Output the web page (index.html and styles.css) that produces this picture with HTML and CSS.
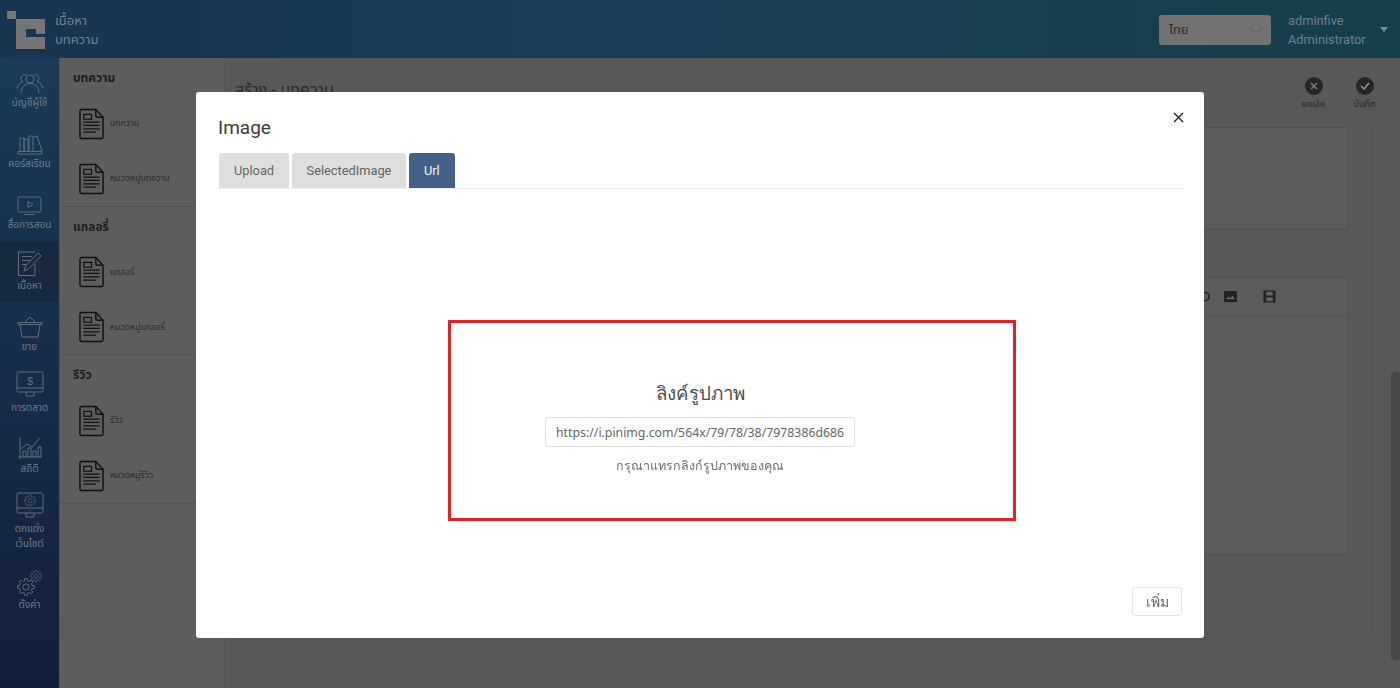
FILE: index.html
```html
<!DOCTYPE html>
<html lang="th">
<head>
<meta charset="utf-8">
<title>Image</title>
<link rel="stylesheet" href="styles.css">
</head>
<body>
<svg class="defs" width="0" height="0" aria-hidden="true">
  <symbol id="doc" viewBox="0 0 26 32">
    <path d="M2.500 1h15l7.500 8v20.500a1.500 1.500 0 0 1-1.500 1.500h-21a1.500 1.500 0 0 1-1.500-1.500v-27a1.500 1.500 0 0 1 1.500-1.500z" fill="none" stroke="currentColor" stroke-width="1.500"/>
    <path d="M17.500 1v6.500a1.500 1.500 0 0 0 1.500 1.500h6" fill="none" stroke="currentColor" stroke-width="1.500"/>
    <rect x="5" y="6" width="8" height="5" fill="none" stroke="currentColor" stroke-width="1.300"/>
    <path d="M4.500 14h17M4.500 17.500h17M4.500 21h17M4.500 24.500h13" fill="none" stroke="currentColor" stroke-width="1.300"/>
  </symbol>
  <symbol id="gear" viewBox="0 0 20 20">
    <path d="M16.790 8.310L19.380 8.510V11.490L16.790 11.690L16 13.610L17.690 15.580L15.580 17.690L13.610 16L11.690 16.790L11.490 19.380H8.510L8.310 16.790L6.390 16L4.420 17.690L2.310 15.580L4 13.610L3.210 11.690L0.620 11.490V8.510L3.210 8.310L4 6.390L2.310 4.420L4.420 2.310L6.390 4L8.310 3.210L8.510 0.620H11.490L11.690 3.210L13.610 4L15.580 2.310L17.690 4.420L16 6.390Z" fill="none" stroke="currentColor" stroke-width="1"/>
    <circle cx="10" cy="10" r="3.500" fill="none" stroke="currentColor" stroke-width="1"/>
  </symbol>
</svg>
<div class="app">
  <header class="topbar">
    <div class="brand">
      <svg class="logo" viewBox="0 0 38 38" width="38" height="38" aria-hidden="true">
        <rect x="0" y="0" width="9" height="8" fill="#757575"/>
        <path d="M9 8h29v15h-9v-5H19v8h19v12H9z" fill="#757575"/>
      </svg>
      <div class="brand-text"><span>เนื้อหา</span><span>บทความ</span></div>
    </div>
    <div class="top-right">
      <div class="lang"><span>ไทย</span>
        <svg width="14" height="8" viewBox="0 0 14 8" aria-hidden="true"><path d="M1 1l6 6 6-6" fill="none" stroke="#5f5f5f"/></svg>
      </div>
      <div class="user"><span>adminfive</span><span>Administrator</span></div>
      <div class="caret"></div>
    </div>
  </header>
  <div class="body">
    <nav class="rail">
      <a class="rail-item">
        <svg viewBox="0 0 28 22" width="28" height="22" aria-hidden="true"><g class="ln"><circle cx="14" cy="7" r="4"/><path d="M5 21c0-6 4-9.500 9-9.500s9 3.500 9 9.500"/><path d="M10.500 3a3.500 3.500 0 1 0-3.500 6.500c-3 1-5.500 3.500-6 7M17.500 3a3.500 3.500 0 1 1 3.500 6.500c3 1 5.500 3.500 6 7"/></g></svg>
        <span>บัญชีผู้ใช้</span></a>
      <a class="rail-item">
        <svg viewBox="0 0 26 20" width="26" height="20" aria-hidden="true"><g class="ln"><path d="M1 19h24v-2.500H1zM3 16V3h4v13M7 16V4h4v12M12 16V1h4v15M17 2l3-1 5 15"/></g></svg>
        <span>คอร์สเรียน</span></a>
      <a class="rail-item">
        <svg viewBox="0 0 26 20" width="26" height="20" aria-hidden="true"><g class="ln"><rect x="1" y="1" width="23" height="15" rx="1.500"/><path d="M11 5.500l5 3-5 3zM7 18.500h11"/></g></svg>
        <span>สื่อการสอน</span></a>
      <a class="rail-item active">
        <svg viewBox="0 0 26 26" width="26" height="26" aria-hidden="true"><g class="ln"><path d="M18 1H1.500v23.500H18V13M5 5.500h10M5 9.500h8M5 13.500h4"/><path d="M7 20l1.500-5L21 2l3 3L12 17.500z"/></g></svg>
        <span>เนื้อหา</span></a>
      <a class="rail-item">
        <svg viewBox="0 0 26 22" width="26" height="22" aria-hidden="true"><g class="ln"><path d="M1 6.500h24v2H1zM3 8.500l2 12.500h16l2-12.500M8 6l5-5 5 5"/></g></svg>
        <span>ขาย</span></a>
      <a class="rail-item">
        <svg viewBox="0 0 28 28" width="28" height="28" aria-hidden="true"><g class="ln"><rect x="1" y="1" width="26" height="20" rx="1.500"/><path d="M1 17h26M10 21v4h8v-4"/></g><text x="14" y="13.500" class="dollar">$</text></svg>
        <span>การตลาด</span></a>
      <a class="rail-item">
        <svg viewBox="0 0 24 24" width="24" height="24" aria-hidden="true"><g class="ln"><path d="M2 1v22M0 21h24M5 21v-6h3v6M10 21v-9h3v9M15 21v-6h3v6M20 21v-10h3v10M3 13l6-5 5 3 8-9"/></g></svg>
        <span>สถิติ</span></a>
      <a class="rail-item tall">
        <svg viewBox="0 0 28 28" width="28" height="28" aria-hidden="true"><g class="ln"><rect x="1" y="1" width="26" height="20" rx="1.500"/><path d="M1 16h26M10 21v4h8v-4M14 18v1"/></g><use href="#gear" x="8" y="2.500" width="12" height="12" class="gear"/></svg>
        <span>ตกแต่ง<br>เว็บไซต์</span></a>
      <a class="rail-item">
        <svg viewBox="0 0 26 26" width="26" height="26" aria-hidden="true"><use href="#gear" x="0" y="8" width="18" height="18" class="gear"/><use href="#gear" x="13" y="0" width="12" height="12" class="gear"/></svg>
        <span>ตั้งค่า</span></a>
    </nav>
    <aside class="submenu">
      <section class="sub-section">
        <h3>บทความ</h3>
        <a class="sub-row"><svg class="doc"><use href="#doc"/></svg><span>บทความ</span></a>
        <a class="sub-row"><svg class="doc"><use href="#doc"/></svg><span>หมวดหมู่บทความ</span></a>
      </section>
      <section class="sub-section">
        <h3>แกลอรี่</h3>
        <a class="sub-row"><svg class="doc"><use href="#doc"/></svg><span>แกลอรี่</span></a>
        <a class="sub-row"><svg class="doc"><use href="#doc"/></svg><span>หมวดหมู่แกลอรี่</span></a>
      </section>
      <section class="sub-section">
        <h3>รีวิว</h3>
        <a class="sub-row"><svg class="doc"><use href="#doc"/></svg><span>รีวิว</span></a>
        <a class="sub-row"><svg class="doc"><use href="#doc"/></svg><span>หมวดหมู่รีวิว</span></a>
      </section>
    </aside>
    <main class="content">
      <div class="content-head">
        <h2>สร้าง - บทความ</h2>
        <div class="actions">
          <div class="action"><span class="round">
            <svg width="10" height="10" viewBox="0 0 10 10" aria-hidden="true"><path d="M2 2l6 6M8 2l-6 6" stroke="#7a7a7a" stroke-width="1.500"/></svg></span><span>ยกเลิก</span></div>
          <div class="action"><span class="round">
            <svg width="10" height="10" viewBox="0 0 10 10" aria-hidden="true"><path d="M1 5l3 3 5-6" fill="none" stroke="#9a9a9a" stroke-width="1.500"/></svg></span><span>บันทึก</span></div>
        </div>
      </div>
      <div class="panel">
        <div class="card card-top"></div>
        <div class="card card-editor">
          <div class="toolbar">
            <svg class="tool" viewBox="0 0 14 14" aria-hidden="true"><path d="M3 7a4.500 4.500 0 1 0 4.500-4.500H3M5 0.500L3 2.500l2 2" fill="none" stroke="#222" stroke-width="1.800"/></svg>
            <svg class="tool tool-gap" viewBox="0 0 14 14" aria-hidden="true"><rect x="0" y="1" width="14" height="12" rx="1" fill="#222"/><path d="M2 10l3-3 2 2 2-3 3 4z" fill="#666"/></svg>
            <svg class="tool" viewBox="0 0 14 14" aria-hidden="true"><rect x="0.500" y="0.500" width="13" height="13" rx="1" fill="#222"/><rect x="3.500" y="2" width="7" height="4" fill="#666"/><rect x="3.500" y="8" width="7" height="4" fill="#666"/></svg>
          </div>
        </div>
      </div>
    </main>
  </div>
  <div class="scroll-thumb"></div>
</div>

<div class="backdrop">
  <div class="modal">
    <div class="modal-head">
      <h1>Image</h1>
      <button class="close" aria-label="Close">
        <svg width="11" height="11" viewBox="0 0 11 11" aria-hidden="true"><path d="M1 1l9 9M10 1l-9 9" stroke="#222" stroke-width="1.400"/></svg>
      </button>
    </div>
    <div class="tabs">
      <div class="tab">Upload</div>
      <div class="tab">SelectedImage</div>
      <div class="tab on">Url</div>
    </div>
    <div class="pane">
      <div class="url-title">ลิงค์รูปภาพ</div>
      <div class="url-input">https://i.pinimg.com/564x/79/78/38/7978386d686</div>
      <div class="url-hint">กรุณาแทรกลิงก์รูปภาพของคุณ</div>
    </div>
    <div class="modal-foot"><button class="add">เพิ่ม</button></div>
    <div class="annotation"></div>
  </div>
</div>
</body>
</html>
```

FILE: styles.css
```css
* { box-sizing: border-box; }
html, body { margin: 0; height: 100%; overflow: hidden; }
body { font-family: "Noto Sans", "Noto Sans Thai", Roboto, sans-serif; background: #585858; color: #222; }
.defs { position: absolute; }
.app { height: 688px; display: flex; flex-direction: column; }

.topbar { height: 58px; flex: none; display: flex; justify-content: space-between; background: linear-gradient(90deg, #19344f 0%, #1a3d55 45%, #153f49 100%); }
.brand { display: flex; align-items: center; padding-left: 7px; gap: 11px; padding-top: 1px; }
.logo { display: block; margin-left: 0; margin-right: -1px; }
.brand-text { display: flex; flex-direction: column; gap: 3px; font-size: 13px; line-height: 16px; color: #76828e; }
.top-right { display: flex; align-items: center; padding-right: 12px; }
.lang { width: 112px; height: 30px; margin-top: 2px; background: #727272; border-radius: 3px; display: flex; align-items: center; justify-content: space-between; padding: 0 8px 0 10px; font-size: 13px; color: #2a2a2a; }
.user { display: flex; flex-direction: column; margin-left: 17px; font-family: Roboto, sans-serif; font-size: 12.800px; line-height: 19px; color: #6e7f85; width: 89px; margin-top: 1px; }
.caret { margin-left: 3px; border: 4px solid transparent; border-top: 5px solid #858b8c; border-left-width: 4.500px; border-right-width: 4.500px; margin-top: 4px; }

.body { flex: 1; display: flex; min-height: 0; }
.rail { width: 59px; flex: none; background: linear-gradient(180deg, #1a3a57 0%, #121f3a 100%); display: flex; flex-direction: column; }
.rail-item { height: 61px; flex: none; display: flex; flex-direction: column; align-items: center; justify-content: flex-end; padding-bottom: 9px; gap: 1px; color: #6f7b87; font-size: 10px; line-height: 15px; text-align: center; }
.rail-item.active { background: #17293d; }
.rail-item.tall { height: 75px; }
.rail-item svg { flex: none; }
.ln { fill: none; stroke: #616e7b; stroke-width: 1; }
.gear { color: #616e7b; }
.dollar { font: 11px "Liberation Sans", sans-serif; fill: #616e7b; text-anchor: middle; }

.submenu { width: 166px; flex: none; background: #5d5d5d; border-left: 1px solid #515151; border-right: 1px solid #535353; }
.sub-section { height: 148.500px; border-bottom: 1px solid #525252; padding: 11px 0 0 13px; }
.sub-section h3 { margin: 0; font-size: 12px; line-height: 18px; font-weight: 700; color: #1c1c1c; }
.sub-row { height: 55px; display: flex; align-items: center; gap: 6px; padding-left: 6px; font-size: 8.700px; color: #2b2b2b; }
.sub-row:first-of-type { margin-top: 9px; }
.doc { width: 25px; height: 32px; flex: none; color: #111; }

.content { flex: 1; min-width: 0; padding: 0 0 0 10px; }
.content-head { height: 69px; display: flex; justify-content: space-between; }
.content-head h2 { margin: 20px 0 0; font-size: 16px; font-weight: 400; line-height: 22px; color: #2a2a2a; }
.actions { display: flex; gap: 18px; padding: 19px 19px 0 0; }
.action { width: 33px; flex: none; display: flex; flex-direction: column; align-items: center; gap: 3px; font-size: 9px; line-height: 12px; color: #242424; }
.round { width: 18px; height: 18px; border-radius: 50%; background: #262626; display: flex; align-items: center; justify-content: center; }
.panel { width: 1137px; height: 513px; border-right: 1px solid #535353; border-bottom: 1px solid #535353; padding-right: 22px; }
.card { border: 1px solid #505050; background: #5b5b5b; }
.card-top { height: 103px; }
.card-editor { height: 278px; margin-top: 47px; }
.toolbar { height: 38px; border-bottom: 1px solid #505050; display: flex; justify-content: flex-end; align-items: center; gap: 13px; padding-right: 72px; }
.tool { width: 13px; height: 13px; }
.tool-gap { margin-right: 13px; }
.scroll-thumb { position: absolute; left: 1391px; top: 372px; width: 9px; height: 288px; border-radius: 4px; background: #474747; }

.backdrop { position: fixed; inset: 0; display: flex; justify-content: center; align-items: flex-start; padding-top: 92px; }
.modal { position: relative; width: 1008px; height: 546px; background: #fff; border-radius: 3px; padding: 0 22px; display: flex; flex-direction: column; font-family: Roboto, "Noto Sans", sans-serif; }
.modal-head { height: 61px; flex: none; display: flex; justify-content: space-between; align-items: flex-start; }
.modal-head h1 { margin: 23px 0 0; font-size: 19px; line-height: 25px; font-weight: 400; color: #3a3a3a; }
.close { margin: 20px -2px 0 0; padding: 0; border: 0; background: none; width: 11px; height: 11px; display: flex; }
.tabs { display: flex; gap: 2.500px; height: 36px; flex: none; border-bottom: 1px solid #eee; padding-left: 1px; }
.tab { height: 35px; padding: 0 15px; background: #dedede; border-radius: 3px 3px 0 0; font-size: 12.800px; line-height: 35px; color: #666; }
.tab.on { background: #446087; color: #f2f2f2; }
.pane { flex: 1; display: flex; flex-direction: column; align-items: center; padding-top: 192px; }
.url-title { font-size: 18.700px; line-height: 26px; color: #4e4e4e; }
.url-input { width: 310px; height: 30px; margin-top: 10px; border: 1px solid #e3e3e3; border-radius: 4px; padding: 0 10px; font-size: 12.300px; line-height: 29px; white-space: nowrap; overflow: hidden; color: #666; font-family: "Noto Sans", sans-serif; }
.url-hint { margin-top: 9px; font-size: 12.500px; line-height: 20px; color: #6f6f6f; }
.modal-foot { height: 51px; flex: none; display: flex; justify-content: flex-end; align-items: flex-start; }
.add { width: 50px; height: 29px; background: #fff; border: 1px solid #e3e3e3; border-radius: 3px; font-size: 14px; color: #666; padding: 0; font-family: inherit; }
.annotation { position: absolute; left: 252px; top: 228px; width: 568px; height: 201px; border: 3px solid #ec1c24; pointer-events: none; }
```
